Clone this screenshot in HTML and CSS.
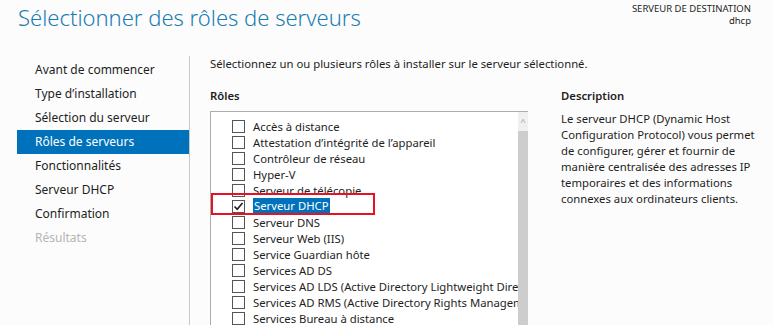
FILE: index.html
```html
<!DOCTYPE html>
<html lang="fr">
<head>
    <meta charset="UTF-8">
    <title>Sélectionner des rôles de serveurs</title>
    <link rel="stylesheet" href="styles.css">
</head>
<body>
    <div class="wizard">
        <div class="header">
            <div class="title">Sélectionner des rôles de serveurs</div>
            <div class="dest">
                <div>SERVEUR DE DESTINATION</div>
                <div>dhcp</div>
            </div>
        </div>
        <div class="main">
            <ul class="nav">
                <li>Avant de commencer</li>
                <li>Type d’installation</li>
                <li>Sélection du serveur</li>
                <li class="active">Rôles de serveurs</li>
                <li>Fonctionnalités</li>
                <li>Serveur DHCP</li>
                <li>Confirmation</li>
                <li class="disabled">Résultats</li>
            </ul>
            <div class="content">
                <p class="intro">Sélectionnez un ou plusieurs rôles à installer sur le serveur sélectionné.</p>
                <div class="columns">
                    <div class="roles">
                        <div class="label">Rôles</div>
                        <div class="listbox">
                            <ul class="role-list">
                                <li><span class="box"></span><span>Accès à distance</span></li>
                                <li><span class="box"></span><span>Attestation d’intégrité de l’appareil</span></li>
                                <li><span class="box"></span><span>Contrôleur de réseau</span></li>
                                <li><span class="box"></span><span>Hyper-V</span></li>
                                <li><span class="box"></span><span>Serveur de télécopie</span></li>
                                <li class="selected"><span class="box checked">
                                    <svg width="11" height="11" viewBox="0 0 11 11"><path d="M1.5 5.5 L4.2 8.3 L9.5 2" fill="none" stroke="#1e1e1e" stroke-width="1.6"/></svg>
                                </span><span class="name">Serveur DHCP</span></li>
                                <li><span class="box"></span><span>Serveur DNS</span></li>
                                <li><span class="box"></span><span>Serveur Web (IIS)</span></li>
                                <li><span class="box"></span><span>Service Guardian hôte</span></li>
                                <li><span class="box"></span><span>Services AD DS</span></li>
                                <li><span class="box"></span><span>Services AD LDS (Active Directory Lightweight Directory Services)</span></li>
                                <li><span class="box"></span><span>Services AD RMS (Active Directory Rights Management Services)</span></li>
                                <li><span class="box"></span><span>Services Bureau à distance</span></li>
                                <li><span class="box"></span><span>Services d’activation en volume</span></li>
                            </ul>
                            <div class="scrollbar">
                                <div class="arrow">^</div>
                                <div class="thumb"></div>
                            </div>
                            <div class="highlight"></div>
                        </div>
                    </div>
                    <div class="description">
                        <div class="label">Description</div>
                        <p>Le serveur DHCP (Dynamic Host Configuration Protocol) vous permet de configurer, gérer et fournir de manière centralisée des adresses IP temporaires et des informations connexes aux ordinateurs clients.</p>
                    </div>
                </div>
            </div>
        </div>
    </div>
</body>
</html>
```

FILE: styles.css
```css
body, html {
    margin: 0;
    padding: 0;
    background: #fcfcfc;
    color: #1e1e1e;
    font-family: 'Noto Sans', 'Open Sans', sans-serif;
    font-size: 12px;
    overflow: hidden;
}

.wizard {
    width: 773px;
    height: 325px;
    overflow: hidden;
}

.header {
    display: flex;
    justify-content: space-between;
    height: 56px;
}

.title {
    margin: 0 0 0 18px;
    padding-top: 1px;
    font-size: 22px;
    font-weight: 300;
    color: #1b7cb3;
    line-height: 32px;
}

.dest {
    padding: 3px 22px 0 0;
    text-align: right;
    font-size: 9.5px;
    line-height: 12px;
}

.main {
    display: flex;
    height: 269px;
}

.nav {
    list-style: none;
    margin: 0;
    padding: 2px 0 0 17px;
    width: 172px;
    border-right: 1px solid #c8c8c8;
}

.nav li {
    height: 24px;
    line-height: 24px;
    padding-left: 18px;
}

.nav li.active {
    background: #0072bb;
    color: #fff;
}

.nav li.disabled {
    color: #b5b5b5;
}

.content {
    padding-left: 20px;
    flex: 1;
    font-size: 11.3px;
}

.intro {
    margin: 0;
    line-height: 16px;
}

.columns {
    display: flex;
    margin-top: 16px;
}

.label {
    font-weight: 600;
    line-height: 16px;
}

.roles {
    width: 318px;
}

.listbox {
    position: relative;
    display: flex;
    margin-top: 7px;
    height: 220px;
    border: 1px solid #adadad;
    border-right: none;
    background: #fff;
}

.role-list {
    list-style: none;
    margin: 0;
    padding: 6px 0 0 21px;
    flex: 1;
    overflow: hidden;
}

.role-list li {
    display: flex;
    align-items: center;
    height: 16px;
    white-space: nowrap;
}

.box {
    width: 11px;
    height: 11px;
    border: 1px solid #555;
    margin-right: 8px;
    background: #fff;
    flex: none;
    display: flex;
    align-items: center;
    justify-content: center;
}

.box svg {
    display: block;
}

.selected .name {
    background: #0072bb;
    color: #fff;
    padding: 0 1px;
    line-height: 16px;
}

.scrollbar {
    width: 10px;
    flex: none;
    display: flex;
    flex-direction: column;
    background: #f0f0f0;
}

.arrow {
    height: 19px;
    text-align: center;
    font-size: 9px;
    line-height: 20px;
    color: #a0a0a0;
}

.thumb {
    flex: 1;
    background: #cdcdcd;
}

.highlight {
    position: absolute;
    left: 0;
    top: 81px;
    width: 160px;
    height: 18px;
    border: 2px solid #e81123;
}

.description {
    margin-left: 33px;
    width: 207px;
}

.description p {
    margin: 7px 0 0;
    line-height: 16px;
}
```
